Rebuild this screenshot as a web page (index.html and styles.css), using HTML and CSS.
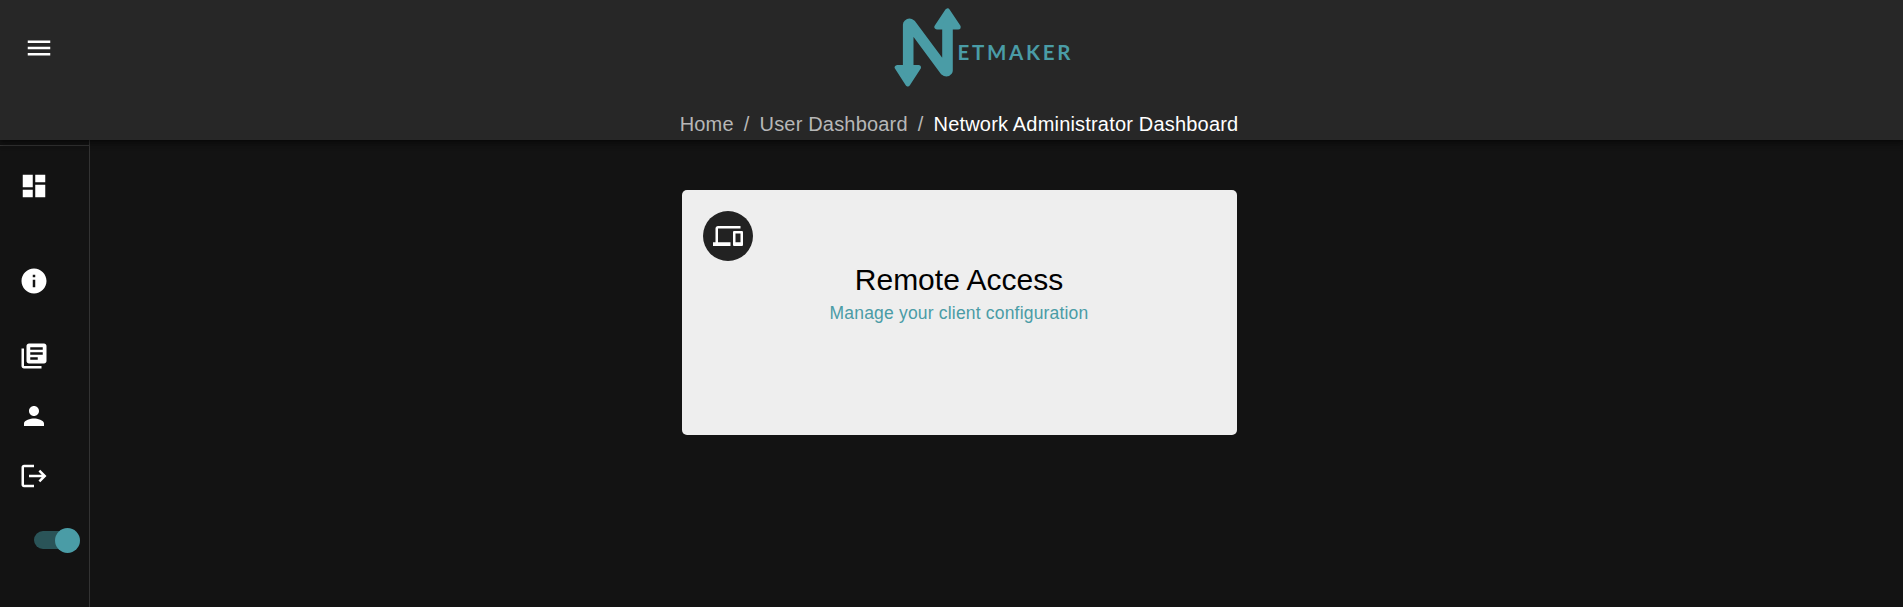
FILE: index.html
```html
<!DOCTYPE html>
<html lang="en">
<head>
<meta charset="utf-8">
<title>Netmaker</title>
<link rel="stylesheet" href="styles.css">
</head>
<body>
<header class="app-bar">
  <div class="toolbar">
    <button class="menu-button" aria-label="Open menu"><svg class="icon" viewBox="0 0 24 24"><path d="M3 18h18v-2H3v2zm0-5h18v-2H3v2zm0-7v2h18V6H3z"/></svg></button>
    <svg class="logo" viewBox="0 0 180 90" role="img" aria-label="Netmaker">
      <path class="logo-stroke" d="M18.200 68V24.700Q19.500 23.500 21 24.700L55 70.500Q56.500 71.800 57.500 70.500V26"/>
      <path class="logo-head" d="M7.200 67.500H28.500L17.800 83.800Z"/>
      <path class="logo-head" d="M46.900 27H68.200L57.500 11Z"/>
      <text class="logo-text" x="67.500" y="60" textLength="113">ETMAKER</text>
    </svg>
  </div>
  <nav class="breadcrumbs">
    <a>Home</a><span class="separator">/</span><a>User Dashboard</a><span class="separator">/</span><span class="current">Network Administrator Dashboard</span>
  </nav>
</header>
<div class="layout">
  <aside class="sidebar">
    <a class="nav-item dashboard"><svg class="icon" viewBox="0 0 24 24"><path d="M3 13h8V3H3v10zm0 8h8v-6H3v6zm10 0h8V11h-8v10zm0-18v6h8V3h-8z"/></svg></a>
    <a class="nav-item info"><svg class="icon" viewBox="0 0 24 24"><path d="M12 2C6.480 2 2 6.480 2 12s4.480 10 10 10 10-4.480 10-10S17.520 2 12 2zm1 15h-2v-6h2v6zm0-8h-2V7h2v2z"/></svg></a>
    <a class="nav-item"><svg class="icon" viewBox="0 0 24 24"><path d="M4 6H2v14c0 1.100.9 2 2 2h14v-2H4V6zm16-4H8c-1.100 0-2 .9-2 2v12c0 1.100.9 2 2 2h12c1.100 0 2-.9 2-2V4c0-1.100-.9-2-2-2zm-1 9H9V9h10v2zm-4 4H9v-2h6v2zm4-8H9V5h10v2z"/></svg></a>
    <a class="nav-item"><svg class="icon" viewBox="0 0 24 24"><path d="M12 12c2.210 0 4-1.790 4-4s-1.790-4-4-4-4 1.790-4 4 1.790 4 4 4zm0 2c-2.670 0-8 1.340-8 4v2h16v-2c0-2.660-5.330-4-8-4z"/></svg></a>
    <a class="nav-item"><svg class="icon" viewBox="0 0 24 24"><path d="M17 7l-1.410 1.410L18.170 11H8v2h10.170l-2.580 2.580L17 17l5-5zM4 5h8V3H4c-1.100 0-2 .9-2 2v14c0 1.100.9 2 2 2h8v-2H4V5z"/></svg></a>
    <div class="switch"><span class="thumb"></span></div>
  </aside>
  <main class="content">
    <section class="card">
      <div class="avatar"><svg class="icon" viewBox="0 0 24 24"><path d="M4 6h18V4H4c-1.100 0-2 .9-2 2v11H0v3h14v-3H4V6zm19 2h-6c-.55 0-1 .45-1 1v10c0 .55.45 1 1 1h6c.55 0 1-.45 1-1V9c0-.55-.45-1-1-1zm-1 9h-4v-7h4v7z"/></svg></div>
      <h1 class="card-title">Remote Access</h1>
      <p class="card-text">Manage your client configuration</p>
    </section>
  </main>
</div>
</body>
</html>
```
FILE: styles.css
```css
* { box-sizing: border-box; }
body {
  margin: 0;
  height: 607px;
  display: flex;
  flex-direction: column;
  overflow: hidden;
  background: #131313;
  color: #fff;
  font-family: "Liberation Sans", Arial, sans-serif;
}
.icon { display: block; width: 30px; height: 30px; fill: currentColor; }
.app-bar {
  position: relative;
  z-index: 1;
  flex: none;
  height: 140px;
  background: #272727;
  box-shadow: 0 2px 4px -1px rgba(0,0,0,.3), 0 4px 5px rgba(0,0,0,.24), 0 1px 10px rgba(0,0,0,.2);
}
.toolbar {
  display: grid;
  grid-template-columns: 866px 180px;
  align-items: center;
  height: 96px;
  padding: 0 24px;
}
.menu-button {
  justify-self: start;
  padding: 0;
  border: 0;
  background: none;
  color: #fff;
}
.logo { width: 180px; height: 90px; align-self: start; overflow: visible; }
.logo-stroke { fill: none; stroke: #4a9ca6; stroke-width: 10.600; stroke-linejoin: round; }
.logo-head { fill: #4a9ca6; stroke: #4a9ca6; stroke-width: 5; stroke-linejoin: round; }
.logo-text { fill: #4a9ca6; font: 700 20.500px Lato, sans-serif; }
.breadcrumbs {
  display: flex;
  justify-content: center;
  padding: 13px 0 0 15px;
  color: #b7b7b7;
  font-size: 20px;
  line-height: 30px;
  letter-spacing: .00938em;
}
.separator { margin: 0 10px; }
.current { color: #fff; }
.layout { flex: 1; display: flex; }
.sidebar {
  width: 90px;
  padding-top: 5px;
  border-right: 1px solid #333;
}
.nav-item {
  display: flex;
  align-items: center;
  height: 60px;
  padding-left: 19px;
}
.dashboard { height: 81px; border-top: 1px solid #333; }
.info { margin-top: 25px; margin-bottom: 15px; }
.switch {
  display: flex;
  align-items: center;
  justify-content: flex-end;
  width: 42.500px;
  height: 18px;
  margin: 25px 0 0 34px;
  border-radius: 9px;
  background: #2a5458;
}
.thumb {
  flex: none;
  width: 25px;
  height: 25px;
  margin: 1px -3.500px 0 0;
  border-radius: 50%;
  background: #4a9ca6;
}
.content { flex: 1; padding: 50px 0 0 592px; }
.card {
  width: 555px;
  height: 245px;
  padding: 21px 22px 21px 21px;
  border-radius: 5px;
  background: #eee;
  color: #000;
  text-align: center;
}
.avatar {
  display: grid;
  place-items: center;
  width: 50px;
  height: 50px;
  border-radius: 50%;
  background: #222;
  color: #fff;
}
.card-title { margin: 0; font-size: 30px; font-weight: 400; line-height: 38px; }
.card-text {
  margin: 2px 0 0;
  color: #4a9ca6;
  font-size: 17.500px;
  line-height: 25px;
  letter-spacing: .01071em;
}
```
